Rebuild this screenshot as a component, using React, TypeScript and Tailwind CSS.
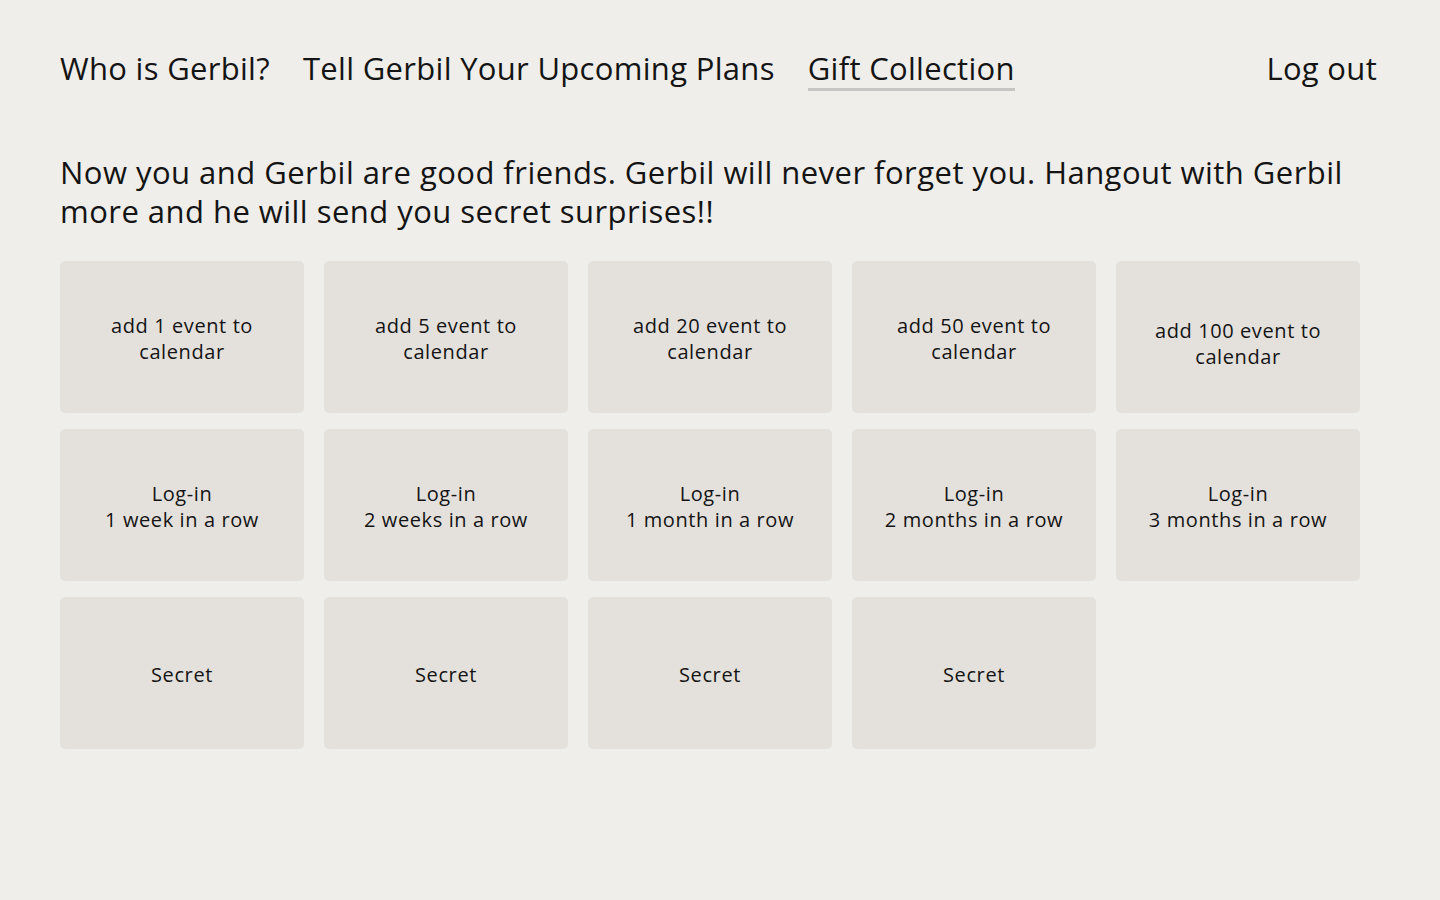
const navItems = [
  { label: "Who is Gerbil?", active: false },
  { label: "Tell Gerbil Your Upcoming Plans", active: false },
  { label: "Gift Collection", active: true },
];

const gifts: { lines: string[]; shift?: boolean }[] = [
  { lines: ["add 1 event to", "calendar"] },
  { lines: ["add 5 event to", "calendar"] },
  { lines: ["add 20 event to", "calendar"] },
  { lines: ["add 50 event to", "calendar"] },
  { lines: ["add 100 event to", "calendar"], shift: true },
  { lines: ["Log-in", "1 week in a row"] },
  { lines: ["Log-in", "2 weeks in a row"] },
  { lines: ["Log-in", "1 month in a row"] },
  { lines: ["Log-in", "2 months in a row"] },
  { lines: ["Log-in", "3 months in a row"] },
  { lines: ["Secret"] },
  { lines: ["Secret"] },
  { lines: ["Secret"] },
  { lines: ["Secret"] },
];

export default function App() {
  return (
    <div className="min-h-screen bg-[#efeeea] px-[60px] pt-[50px] font-['Open_Sans',sans-serif] text-[#141414]">
      <header className="flex items-start justify-between">
        <nav className="flex gap-[33px]">
          {navItems.map((item) => (
            <a
              key={item.label}
              href="#"
              className={`border-b-[3px] pb-[2px] text-[31px] leading-[36px] tracking-[0.01em] ${
                item.active ? "border-[#c6c5c3]" : "border-transparent"
              }`}
            >
              {item.label}
            </a>
          ))}
        </nav>
        <a href="#" className="pr-[3px] text-[31px] leading-[36px] tracking-[0.01em]">
          Log out
        </a>
      </header>

      <p className="mt-[62px] text-[31px] leading-[39px] tracking-[0.015em]">
        Now you and Gerbil are good friends. Gerbil will never forget you. Hangout with Gerbil more and
        he will send you secret surprises!!
      </p>

      <div className="mt-[30px] grid w-[1300px] grid-cols-[repeat(5,244px)] gap-x-[20px] gap-y-[16px]">
        {gifts.map((gift, i) => (
          <div
            key={i}
            className="flex h-[152px] items-center justify-center rounded-[5px] bg-[#e4e1dd] pt-[3px] text-center text-[20px] leading-[26px] tracking-[0.03em]"
          >
            <div className={gift.shift ? "mt-[10px]" : ""}>
              {gift.lines.map((line) => (
                <div key={line}>{line}</div>
              ))}
            </div>
          </div>
        ))}
      </div>
    </div>
  );
}
